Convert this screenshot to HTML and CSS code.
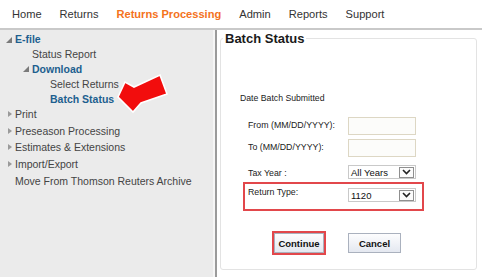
FILE: index.html
```html
<!DOCTYPE html>
<html>
<head>
<meta charset="utf-8">
<link rel="stylesheet" href="styles.css">
</head>
<body>
<nav class="topnav">
  <span class="nav-item">Home</span>
  <span class="nav-item">Returns</span>
  <span class="nav-item active">Returns Processing</span>
  <span class="nav-item">Admin</span>
  <span class="nav-item">Reports</span>
  <span class="nav-item">Support</span>
</nav>
<div class="main">
  <aside class="sidebar">
    <div class="row grp lvl0 exp"><span class="tri-open"></span><span class="link">E-file</span></div>
    <div class="row grp lvl1">Status Report</div>
    <div class="row grp lvl1 exp"><span class="tri-open"></span><span class="link">Download</span></div>
    <div class="row grp lvl2">Select Returns</div>
    <div class="row grp lvl2"><span class="link">Batch Status</span></div>
    <div class="row top col"><span class="tri-closed"></span>Print</div>
    <div class="row top col"><span class="tri-closed"></span>Preseason Processing</div>
    <div class="row top col"><span class="tri-closed"></span>Estimates &amp; Extensions</div>
    <div class="row top col"><span class="tri-closed"></span>Import/Export</div>
    <div class="row top lvl0">Move From Thomson Reuters Archive</div>
  </aside>
  <div class="divider"></div>
  <section class="content">
    <fieldset class="panel">
      <legend>Batch Status</legend>
      <div class="form">
        <div class="section-title">Date Batch Submitted</div>
        <div class="frow">
          <span class="flabel">From (MM/DD/YYYY):</span>
          <input class="tinput" type="text">
        </div>
        <div class="frow gap4">
          <span class="flabel">To (MM/DD/YYYY):</span>
          <input class="tinput" type="text">
        </div>
        <div class="frow gap8">
          <span class="flabel">Tax Year :</span>
          <div class="dd"><span class="dd-text">All Years</span><span class="dd-btn"><svg width="9" height="6" viewBox="0 0 9 6"><path d="M1 1 L4.5 4.5 L8 1" fill="none" stroke="#222" stroke-width="1.6"/></svg></span></div>
        </div>
        <div class="frow hl">
          <span class="flabel hl-label">Return Type:</span>
          <div class="dd"><span class="dd-text">1120</span><span class="dd-btn"><svg width="9" height="6" viewBox="0 0 9 6"><path d="M1 1 L4.5 4.5 L8 1" fill="none" stroke="#222" stroke-width="1.6"/></svg></span></div>
        </div>
        <div class="buttons">
          <button class="btn primary" type="button">Continue</button>
          <button class="btn" type="button">Cancel</button>
        </div>
      </div>
    </fieldset>
  </section>
</div>
<svg class="arrow" width="66" height="50" viewBox="0 0 66 50">
  <polygon points="8,27 15,12 24,17 50,5 57,24 31,33 23,42" fill="#f20d0d" stroke="#ffffff" stroke-width="1.6" stroke-linejoin="miter"/>
</svg>
</body>
</html>
```

FILE: styles.css
```css
html, body {
  margin: 0;
  padding: 0;
}
body {
  position: relative;
  width: 482px;
  height: 277px;
  overflow: hidden;
  background: #ffffff;
  font-family: "Liberation Sans", Arial, sans-serif;
  color: #333333;
}
.topnav {
  height: 28px;
  border-bottom: 2px solid #c9c9c9;
  display: flex;
  align-items: center;
  padding-left: 3px;
  font-size: 11.1px;
  color: #333333;
}
.nav-item {
  padding: 0 9px;
  white-space: nowrap;
}
.nav-item.active {
  color: #f47220;
  font-weight: bold;
}
.main {
  display: flex;
  height: 247px;
}
.sidebar {
  width: 213px;
  background: #ebebeb;
  padding-top: 2px;
  font-size: 10.5px;
  color: #444444;
  box-sizing: border-box;
}
.row {
  display: flex;
  align-items: center;
  white-space: nowrap;
}
.row.grp { height: 14.8px; }
.row.top { height: 16.6px; }
.lvl0 { padding-left: 15px; }
.lvl1 { padding-left: 32px; }
.lvl2 { padding-left: 50px; }
.lvl0.exp { padding-left: 6px; }
.lvl1.exp { padding-left: 23px; }
.row.col { padding-left: 8px; }
.tri-open {
  width: 0;
  height: 0;
  border-left: 6px solid transparent;
  border-bottom: 6px solid #7a7a7a;
  margin-right: 3px;
  margin-top: 1px;
}
.tri-closed {
  width: 0;
  height: 0;
  border-top: 3.5px solid transparent;
  border-bottom: 3.5px solid transparent;
  border-left: 4px solid #9a9a9a;
  margin-right: 3px;
}
.link {
  color: #1d5f8f;
  font-weight: bold;
}
.divider {
  width: 2px;
  background: #f6f6f6;
  border-right: 2px solid #9b9b9b;
}
.content {
  flex: 1;
  min-width: 0;
}
.panel {
  margin: 1px 5px 0 3px;
  padding: 0 0 0 2px;
  border: 1px solid #e3e3e3;
  border-radius: 3px;
  height: 239px;
  box-sizing: border-box;
  min-width: 0;
}
.panel legend {
  padding: 0 2px;
  font-size: 13px;
  font-weight: bold;
  color: #1a1a1a;
  line-height: 15px;
}
.form {
  padding-left: 17px;
}
.section-title {
  margin-top: 47px;
  font-size: 8.7px;
  line-height: 11px;
  color: #222222;
}
.frow {
  display: flex;
  align-items: flex-start;
  margin-top: 13px;
  padding-left: 8px;
}
.frow.gap4 { margin-top: 4px; }
.frow.gap8 { margin-top: 8px; }
.flabel {
  width: 100px;
  font-size: 8.8px;
  line-height: 11px;
  padding-top: 2.5px;
  color: #222222;
  white-space: nowrap;
}
.tinput {
  width: 68px;
  height: 18px;
  box-sizing: border-box;
  border: 1px solid #ddd7c4;
  background: #fcfcfa;
  margin: 0;
  padding: 0;
}
.dd {
  width: 68px;
  height: 14px;
  box-sizing: border-box;
  border: 1px solid #c9c9c9;
  display: flex;
  align-items: center;
  justify-content: space-between;
  background: #ffffff;
}
.dd-text {
  font-size: 9.5px;
  color: #111111;
  padding-left: 2px;
}
.dd-btn {
  width: 15px;
  height: 11px;
  box-sizing: border-box;
  border: 1px solid #8f8f8f;
  margin-right: 1px;
  display: flex;
  align-items: center;
  justify-content: center;
  background: #fbfbfb;
}
.frow.hl {
  margin-top: 3px;
  margin-left: 3px;
  margin-right: 52px;
  border: 2px solid #e2474b;
  padding: 4px 0 7px 3px;
}
.hl-label {
  padding-top: 0;
  margin-top: -1.5px;
}
.buttons {
  display: flex;
  gap: 24px;
  margin-top: 22px;
  padding-left: 34px;
}
.btn {
  width: 53px;
  height: 20px;
  box-sizing: border-box;
  margin: 0;
  padding: 0;
  font-family: "Liberation Sans", Arial, sans-serif;
  font-size: 9.5px;
  font-weight: bold;
  color: #111111;
  border: 1px solid #aab1be;
  background: linear-gradient(#fdfdfe, #e4e8f0);
}
.btn.primary {
  width: 50px;
  outline: 2px solid #e2474b;
  outline-offset: 0;
}
.arrow {
  position: absolute;
  left: 110px;
  top: 70px;
}
```
